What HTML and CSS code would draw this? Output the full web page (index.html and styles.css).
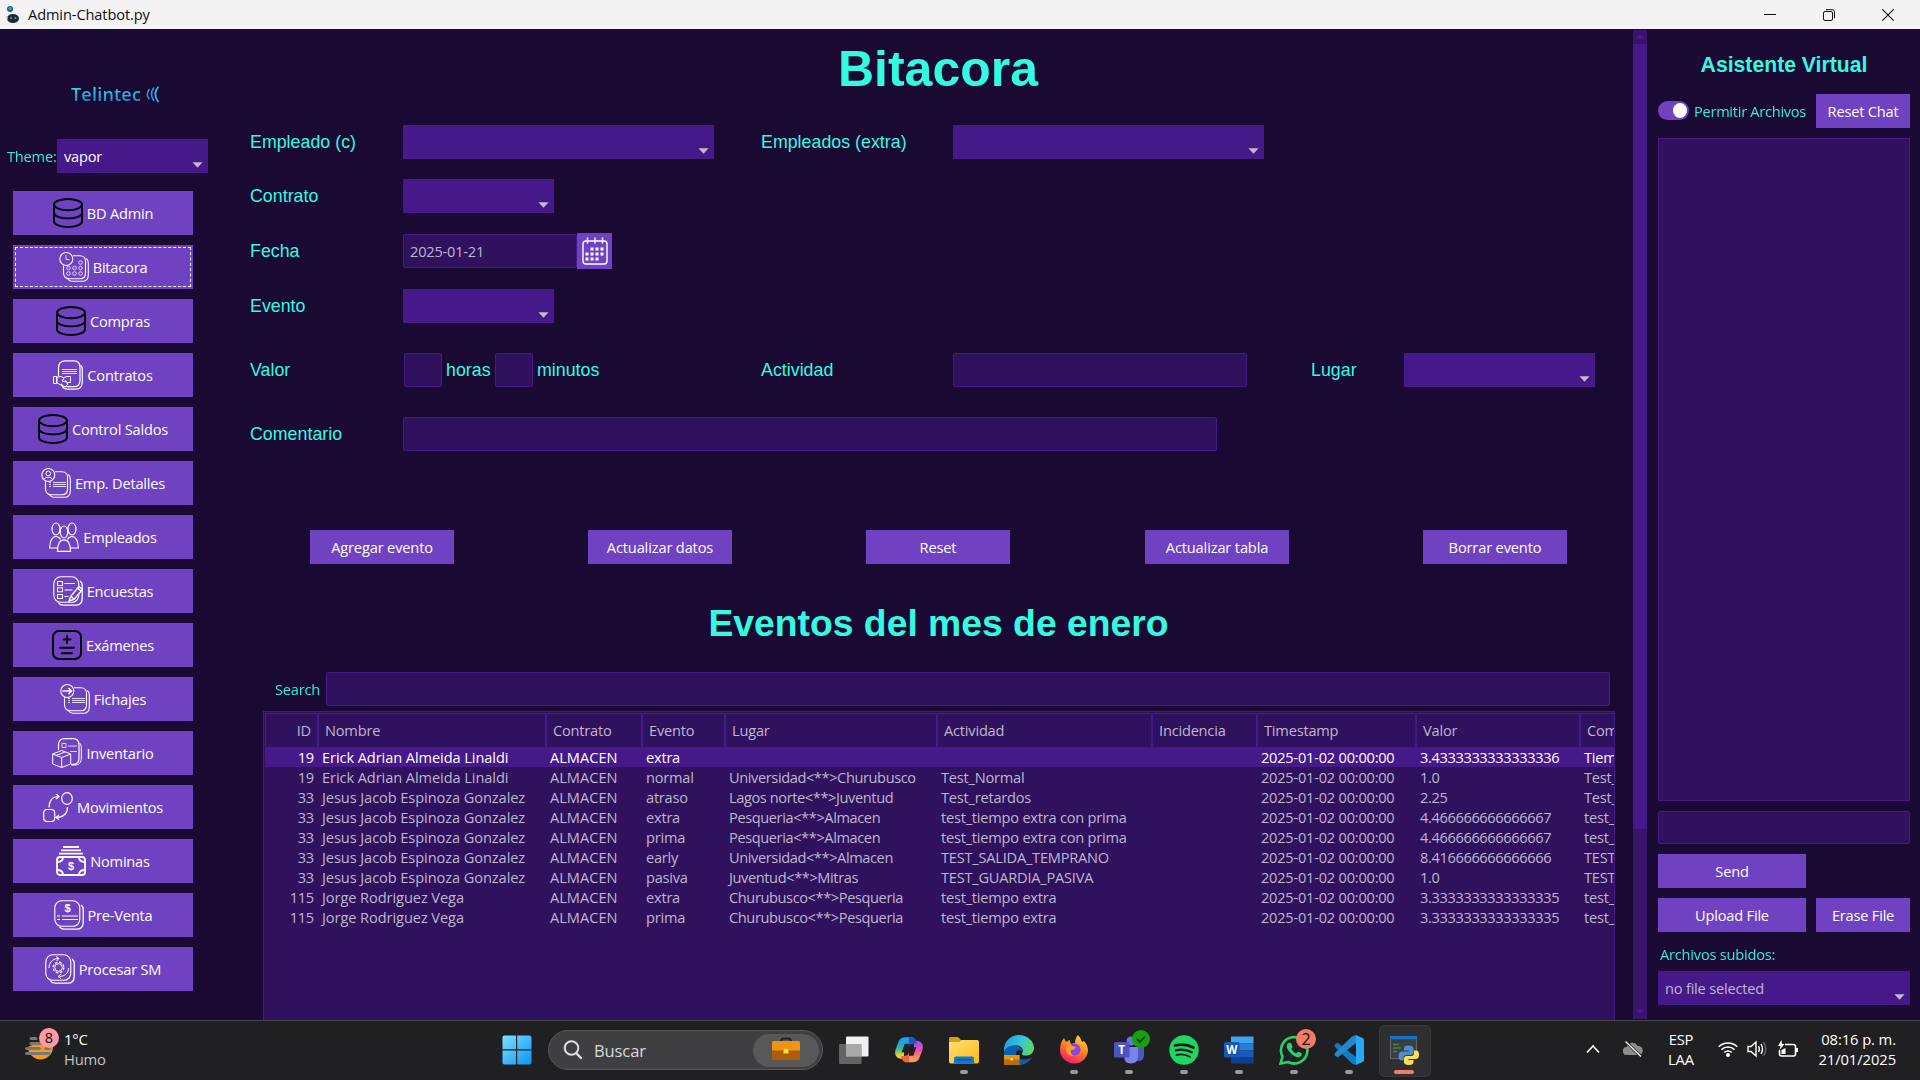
FILE: index.html
```html
<!DOCTYPE html>
<html lang="es">
<head>
<meta charset="utf-8">
<title>Admin-Chatbot.py</title>
<link rel="stylesheet" href="styles.css">
</head>
<body>
<svg class="defs" aria-hidden="true">
  <defs>
    <linearGradient id="gWin" x1="0" y1="0" x2="1" y2="1"><stop offset="0" stop-color="#7fe0ff"/><stop offset="1" stop-color="#0a93f5"/></linearGradient>
    <linearGradient id="gFox" x1="0.8" y1="0" x2="0.3" y2="1"><stop offset="0" stop-color="#ffe13c"/><stop offset=".45" stop-color="#ff8a1e"/><stop offset="1" stop-color="#f5156c"/></linearGradient>
    <linearGradient id="gEdge" x1="0" y1="0.3" x2="1" y2="0.5"><stop offset="0" stop-color="#1f9fe3"/><stop offset=".55" stop-color="#33c6dc"/><stop offset="1" stop-color="#5fd957"/></linearGradient>
    <linearGradient id="gFold" x1="0" y1="0" x2="1" y2="1"><stop offset="0" stop-color="#ffe07a"/><stop offset="1" stop-color="#fdb714"/></linearGradient>
    <linearGradient id="gCopA" x1="0" y1="0" x2="0" y2="1"><stop offset="0" stop-color="#1ea0f0"/><stop offset=".5" stop-color="#27b3b0"/><stop offset="1" stop-color="#e8d02c"/></linearGradient>
    <linearGradient id="gCopB" x1="0" y1="0" x2="0" y2="1"><stop offset="0" stop-color="#a552e8"/><stop offset=".5" stop-color="#f0569a"/><stop offset="1" stop-color="#fb9a55"/></linearGradient>
    <symbol id="db" viewBox="0 0 30 30"><g fill="none" stroke="#000" stroke-width="1.9"><ellipse cx="15" cy="6.6" rx="14" ry="5.6"/><path d="M1 6.6v17c0 3 6.3 5.4 14 5.4s14-2.4 14-5.4v-17"/><path d="M1 15c0 3 6.3 5.4 14 5.4S29 18 29 15"/></g></symbol>
    <symbol id="stack" viewBox="0 0 30 30"><g fill="none" stroke="#fff"><rect x=".8" y=".8" width="25" height="25.500" rx="7" stroke-width="1.1"/><path d="M27 5c1.500 1 2.200 2.500 2.200 4.500v13c0 4-2.500 6.700-6.700 6.700h-12c-2 0-4-.8-5-2.300" stroke-width="1.300"/></g></symbol>
    <symbol id="stackR" viewBox="0 0 30 30"><g fill="none" stroke="#fff" stroke-width="1.100"><path d="M14 3.800h7c3.500 0 5.500 2.500 5.500 5.500v11.500c0 3.500-2 6-5.500 6H10.500c-4 0-6-2.500-6-6V13.500"/><path d="M27.300 6.500c1.300 1 2 2.300 2 4.500v12c0 4-2.500 6.300-6.300 6.300H13c-2.500 0-3.500-1-4.500-2.500"/><circle cx="7.300" cy="7" r="6.500"/></g></symbol>
    <symbol id="arrow" viewBox="0 0 12 6"><path d="M.5 0h11L6 6z" fill="#c3bacd"/></symbol>
  </defs>
</svg>

<header class="titlebar">
  <svg class="app-icon" viewBox="0 0 16 18"><circle cx="5" cy="3" r="3" fill="#1c5f83"/><circle cx="5" cy="2.600" r="1.500" fill="#25b5d8"/><ellipse cx="8" cy="12.500" rx="6" ry="4.600" fill="#22282d"/><path d="M1 11l2-1v4z" fill="#9aa"/><circle cx="6" cy="12" r="1" fill="#25b5d8"/><circle cx="10.500" cy="12" r="1" fill="#25b5d8"/></svg>
  <span class="app-name">Admin-Chatbot.py</span>
  <div class="win-controls">
    <svg viewBox="0 0 12 12"><path d="M0 5.500h12" stroke="#111"/></svg>
    <svg viewBox="0 0 12 12"><g fill="none" stroke="#111"><rect x=".5" y="2.500" width="9" height="9" rx="1.500"/><path d="M3 .7h6c1.500 0 2.500 1 2.500 2.500v6"/></g></svg>
    <svg viewBox="0 0 12 12"><path d="M.3.300l11.400 11.400M11.700.300L.3 11.700" stroke="#111" stroke-width="1.100"/></svg>
  </div>
</header>

<div class="app">
  <nav class="sidebar">
    <div class="logo"><span class="logo-text">Telintec</span><svg viewBox="0 0 15 20"><g fill="none" stroke="#2a9bd6" stroke-width="1.500"><path d="M4.500 5q-4.500 5.500 0 10.500"/><path d="M9 3.500q-5 6.500 0 13.500"/><path d="M13.500 2.500q-6.500 7.500 0 15.500" stroke="#2fbcdf" stroke-width="1.800"/></g></svg></div>
    <div class="theme"><span class="lbl">Theme:</span><div class="combo theme-combo"><span>vapor</span><svg><use href="#arrow"/></svg></div></div>
    <div class="menu">
      <div class="btn"><svg><use href="#db"/></svg>BD Admin</div>
      <div class="btn focus"><svg viewBox="0 0 30 30"><use href="#stackR"/><g fill="none" stroke="#fff" stroke-width=".9" opacity=".85"><path d="M7 3v4.500h3.500"/><circle cx="21.500" cy="10.500" r="1.800"/><circle cx="9.500" cy="16" r="1.800"/><circle cx="15.500" cy="16" r="1.800"/><circle cx="21.500" cy="16" r="1.800"/><circle cx="9.500" cy="21.500" r="1.800"/><circle cx="15.500" cy="21.500" r="1.800"/><circle cx="21.500" cy="21.500" r="1.800"/></g></svg>Bitacora</div>
      <div class="btn"><svg><use href="#db"/></svg>Compras</div>
      <div class="btn"><svg viewBox="0 0 30 30"><g fill="none" stroke="#fff" stroke-width="1.200"><path d="M5.500 16V7.500c0-4 2.500-6.700 6.500-6.700h9c4 0 6 2.700 6 6.700v12.700c0 4-2 6.500-6 6.500h-8c-2.500 0-4-1-5-3"/><path d="M27.500 5c1.200 1 1.800 2.500 1.800 4.500V22c0 4.500-2.500 7.200-6.800 7.200h-8c-2.500 0-4-.8-5.500-3"/><path d="M9 9.500h15M9 11.500h15M9 13.500h15" opacity=".8"/><path d="M.6 16.500h3v7h-3zM4 17l4-.5 3 1.500-2 3 3 .5 3 2.500-3 3-8-4zM11 17.500l3-1h3.500v6H15M12 20l3 3" stroke-width="1"/></g></svg>Contratos</div>
      <div class="btn"><svg><use href="#db"/></svg>Control Saldos</div>
      <div class="btn"><svg viewBox="0 0 30 30"><use href="#stackR"/><g fill="none" stroke="#fff"><circle cx="7.300" cy="5.500" r="2.300"/><path d="M3 11.500c1-3 7.500-3 8.500 0"/><path d="M12 14.500h13M12 16.500h13M12 18.500h13M8 14.500h2M8 16.500h2M8 18.500h2" opacity=".8"/></g></svg>Emp. Detalles</div>
      <div class="btn"><svg viewBox="0 0 30 30"><g fill="none" stroke="#fff" stroke-width="1.200"><ellipse cx="7" cy="7" rx="4" ry="6"/><ellipse cx="23" cy="7" rx="4" ry="6"/><ellipse cx="15" cy="10" rx="3.800" ry="6"/><path d="M8.500 29.400c0-7 2-11.500 6.500-11.500s6.500 4.500 6.500 11.500z"/><path d="M8.500 26H.7c0-6 2-11.500 6.300-11.500 2 0 3.500 1 4.500 3M21.500 26h7.800c0-6-2-11.500-6.300-11.500-2 0-3.500 1-4.500 3"/></g></svg>Empleados</div>
      <div class="btn"><svg viewBox="0 0 30 30"><use href="#stack"/><g fill="none" stroke="#fff"><rect x="4.500" y="5.500" width="5" height="4"/><rect x="4.500" y="11.800" width="5" height="4"/><rect x="4.500" y="18.500" width="5" height="4"/><path d="M11.500 7.500h10.500M11.500 14h8M11.500 20.500h4"/><path d="M16 25l2-5 8-9.500 3.500 3L21 23.500zM18 20.500l3 2.500M24.500 12l3.500 3" fill="#6f42c1" stroke-width="1.400"/></g></svg>Encuestas</div>
      <div class="btn"><svg viewBox="0 0 30 30"><g fill="none" stroke="#000" stroke-width="2"><rect x="1" y="1" width="28" height="28" rx="6"/><path d="M15 6v7M11.500 9.500h7M8 17.700h14M10 23.300h10" stroke-linecap="round"/></g></svg>Exámenes</div>
      <div class="btn"><svg viewBox="0 0 30 30"><use href="#stackR"/><g fill="none" stroke="#fff"><path d="M2.500 7h9M8.500 4l3 3-3 3" stroke-width="1.500"/><path d="M12 14.500h13M12 16.500h13M12 18.500h13M8 14.500h2M8 16.500h2M8 18.500h2" opacity=".8"/></g></svg>Fichajes</div>
      <div class="btn"><svg viewBox="0 0 30 30"><g fill="none" stroke="#fff"><path d="M6.500 12V7c0-4 2-6.300 6-6.300h8.500c4 0 6 2.300 6 6.300v13c0 3.500-1.500 6-5 6.300h-3" stroke-width="1.200"/><path d="M27.500 5c1.200 1 1.800 2.500 1.800 4.500V20c0 4.500-2.500 7-6.300 7h-4"/><path d="M10 5.500h4v4h-4zM16 8h9M18 13.500h7" opacity=".8"/><path d="M.7 16l9-3.500 9 3.500v10l-9 3.500-9-3.500zM.7 16l9 3.500 9-3.500M9.700 19.500v10M4 17.500l9-3.500" fill="#6f42c1"/></g></svg>Inventario</div>
      <div class="btn"><svg viewBox="0 0 30 30"><g fill="none" stroke="#fff" stroke-width="1.200"><ellipse cx="24" cy="6.500" rx="5.300" ry="5.900"/><rect x=".7" y="17.500" width="11" height="12" rx="3.500"/><path d="M6 15.500C6 9 9 4.500 16 4.500M13 2l3 2.500-3 2.500M24.500 15c0 6-3 10-11 10.500M16 23l-3 2.500 3 2"/></g></svg>Movimientos</div>
      <div class="btn"><svg viewBox="0 0 30 30"><g fill="none" stroke="#fff" stroke-width="1.800"><path d="M7 1h16M5 4.300h20M3 7.700h24"/><rect x="1" y="11" width="28" height="18" rx="3"/><path d="M7 11c0 3-2 5-6 5M23 11c0 3 2 5 6 5M7 29c0-3-2-5-6-5M23 29c0-3 2-5 6-5"/></g><text x="15" y="24" class="glyph-s">$</text></svg>Nominas</div>
      <div class="btn"><svg viewBox="0 0 30 30"><use href="#stack"/><text x="13.500" y="11.500" class="glyph-s">$</text><path d="M3 16h3M8 16h16M3 19.500h3M8 19.500h16" stroke="#fff" stroke-width="1.100"/></svg>Pre-Venta</div>
      <div class="btn"><svg viewBox="0 0 30 30"><use href="#stack"/><g fill="none" stroke="#fff"><circle cx="13.500" cy="13.500" r="3.800"/><circle cx="13.500" cy="13.500" r="5.300" stroke-width="1.300" stroke-dasharray="2.600 1.560"/><path d="M4 14c0-5 3-9 9-9.500M11 2.500l3 2-2.500 2.500M23.500 14c0 5-3 8-9 8.500M16 20l-3 2.500 3 2"/></g></svg>Procesar SM</div>
    </div>
  </nav>

  <main class="main">
    <h1>Bitacora</h1>
    <div class="form">
      <label>Empleado (c)</label><div class="combo w311"><svg><use href="#arrow"/></svg></div>
      <label>Empleados (extra)</label><div class="combo w311"><svg><use href="#arrow"/></svg></div>
      <label class="row-start">Contrato</label><div class="combo w151"><svg><use href="#arrow"/></svg></div>
      <label class="row-start">Fecha</label>
      <div class="date"><div class="entry w173">2025-01-21</div><div class="cal"><svg viewBox="0 0 26 28"><g fill="none" stroke="#fff" stroke-width="1.400"><rect x="1" y="4" width="24" height="23" rx="3"/><path d="M5.500.5v6M13 .5v6M20.500.5v6"/></g><g fill="#fff"><path d="M8.500 10.500h3v3h-3zM13.500 10.500h3v3h-3zM18.500 10.500h3v3h-3zM3.500 15.500h3v3h-3zM8.500 15.500h3v3h-3zM13.500 15.500h3v3h-3zM18.500 15.500h3v3h-3zM3.500 20.500h3v3h-3zM8.500 20.500h3v3h-3zM13.500 20.500h3v3h-3z"/></g></svg></div></div>
      <label class="row-start">Evento</label><div class="combo w151"><svg><use href="#arrow"/></svg></div>
      <label class="row-start">Valor</label>
      <div class="time"><div class="entry w38"></div><label>horas</label><div class="entry w38"></div><label>minutos</label></div>
      <label>Actividad</label><div class="entry w294"></div>
      <label>Lugar</label><div class="combo w191"><svg><use href="#arrow"/></svg></div>
      <label class="row-start">Comentario</label><div class="entry wide"></div>
    </div>
    <div class="actions">
      <div class="btn">Agregar evento</div><div class="btn">Actualizar datos</div><div class="btn">Reset</div><div class="btn">Actualizar tabla</div><div class="btn">Borrar evento</div>
    </div>
    <h2>Eventos del mes de enero</h2>
    <div class="search"><span class="lbl">Search</span><div class="entry"></div></div>
    <div class="table">
      <div class="tr head"><span>ID</span><span>Nombre</span><span>Contrato</span><span>Evento</span><span>Lugar</span><span>Actividad</span><span>Incidencia</span><span>Timestamp</span><span>Valor</span><span>Comentario</span></div>
      <div class="tr sel"><span>19</span><span>Erick Adrian Almeida Linaldi</span><span>ALMACEN</span><span>extra</span><span></span><span></span><span></span><span>2025-01-02 00:00:00</span><span>3.4333333333333336</span><span>Tiempo</span></div>
      <div class="tr"><span>19</span><span>Erick Adrian Almeida Linaldi</span><span>ALMACEN</span><span>normal</span><span>Universidad&lt;**&gt;Churubusco</span><span>Test_Normal</span><span></span><span>2025-01-02 00:00:00</span><span>1.0</span><span>Test_</span></div>
      <div class="tr"><span>33</span><span>Jesus Jacob Espinoza Gonzalez</span><span>ALMACEN</span><span>atraso</span><span>Lagos norte&lt;**&gt;Juventud</span><span>Test_retardos</span><span></span><span>2025-01-02 00:00:00</span><span>2.25</span><span>Test_</span></div>
      <div class="tr"><span>33</span><span>Jesus Jacob Espinoza Gonzalez</span><span>ALMACEN</span><span>extra</span><span>Pesqueria&lt;**&gt;Almacen</span><span>test_tiempo extra con prima</span><span></span><span>2025-01-02 00:00:00</span><span>4.466666666666667</span><span>test_t</span></div>
      <div class="tr"><span>33</span><span>Jesus Jacob Espinoza Gonzalez</span><span>ALMACEN</span><span>prima</span><span>Pesqueria&lt;**&gt;Almacen</span><span>test_tiempo extra con prima</span><span></span><span>2025-01-02 00:00:00</span><span>4.466666666666667</span><span>test_t</span></div>
      <div class="tr"><span>33</span><span>Jesus Jacob Espinoza Gonzalez</span><span>ALMACEN</span><span>early</span><span>Universidad&lt;**&gt;Almacen</span><span>TEST_SALIDA_TEMPRANO</span><span></span><span>2025-01-02 00:00:00</span><span>8.416666666666666</span><span>TEST_</span></div>
      <div class="tr"><span>33</span><span>Jesus Jacob Espinoza Gonzalez</span><span>ALMACEN</span><span>pasiva</span><span>Juventud&lt;**&gt;Mitras</span><span>TEST_GUARDIA_PASIVA</span><span></span><span>2025-01-02 00:00:00</span><span>1.0</span><span>TEST_</span></div>
      <div class="tr"><span>115</span><span>Jorge Rodriguez Vega</span><span>ALMACEN</span><span>extra</span><span>Churubusco&lt;**&gt;Pesqueria</span><span>test_tiempo extra</span><span></span><span>2025-01-02 00:00:00</span><span>3.3333333333333335</span><span>test_t</span></div>
      <div class="tr"><span>115</span><span>Jorge Rodriguez Vega</span><span>ALMACEN</span><span>prima</span><span>Churubusco&lt;**&gt;Pesqueria</span><span>test_tiempo extra</span><span></span><span>2025-01-02 00:00:00</span><span>3.3333333333333335</span><span>test_t</span></div>
    </div>
  </main>

  <div class="scrollbar">
    <svg viewBox="0 0 14 14"><path d="M3 8l3.500-4L10 8z" fill="#4b1c90"/></svg>
    <div class="thumb"></div>
    <svg viewBox="0 0 14 14"><path d="M3 5l3.500 4L10 5z" fill="#4b1c90"/></svg>
  </div>

  <aside class="assistant">
    <h3>Asistente Virtual</h3>
    <div class="arow first"><div class="allow"><div class="toggle"><i></i></div><span class="lbl">Permitir Archivos</span></div><div class="btn">Reset Chat</div></div>
    <div class="chat"></div>
    <div class="entry msg"></div>
    <div class="arow"><div class="btn">Send</div></div>
    <div class="arow"><div class="btn">Upload File</div><div class="btn">Erase File</div></div>
    <span class="lbl files">Archivos subidos:</span>
    <div class="combo file-combo"><span>no file selected</span><svg><use href="#arrow"/></svg></div>
  </aside>
</div>

<footer class="taskbar">
  <div class="weather">
    <div class="w-icon"><svg viewBox="0 0 30 30"><path d="M3 14a12.500 12.500 0 0 0 25 0V9H14z" fill="#f39a22"/><path d="M6 5.500h5M6 10.500h10M1.500 15.500h13M21 15.500h3.500M1.500 20.500h23" stroke="#777" stroke-width="3" stroke-linecap="round"/></svg><b class="badge pink">8</b></div>
    <div class="w-text"><div>1°C</div><div class="dim">Humo</div></div>
  </div>
  <div class="dock">
    <div class="slot"><svg viewBox="0 0 30 30"><path d="M.5 2.500a2 2 0 0 1 2-2H14V14.200H.5zM15.200.5h12.300a2 2 0 0 1 2 2v11.700H15.200zM.5 15.400H14v14H2.500a2 2 0 0 1-2-2zM15.200 15.400h14.300v12a2 2 0 0 1-2 2H15.200z" fill="url(#gWin)"/></svg></div>
    <div class="pill">
      <svg class="lens" viewBox="0 0 20 20"><circle cx="8.500" cy="8" r="6.800" fill="none" stroke="#e0e0e0" stroke-width="2"/><path d="M13.500 13.500l4.500 4.500" stroke="#e0e0e0" stroke-width="2.400" stroke-linecap="round"/></svg>
      <span>Buscar</span>
      <div class="pill-in"><svg viewBox="0 0 30 26"><path d="M10 5q0-3.500 3-3.500h4q3 0 3 3.500" fill="none" stroke="#222" stroke-width="2"/><rect x="1" y="4" width="28" height="19" rx="1.500" fill="#a85f08"/><path d="M1 13.500V5.500Q1 4 2.500 4h25Q29 4 29 5.500v8z" fill="#ef9413"/><path d="M12.500 11.500h5v5h-5z" fill="#ffe03a" stroke="#d9a400"/></svg></div>
    </div>
    <div class="slot"><svg viewBox="0 0 30 30"><rect x="7" y="1.500" width="22.500" height="20" rx="1" fill="#f1f1f1"/><rect x="0" y="9" width="22.500" height="20" rx="1" fill="#7b7b7b" opacity=".75"/><path d="M7 9h15.500v12.500H7z" fill="#a9a9a9"/></svg></div>
    <div class="slot"><svg viewBox="0 0 30 30"><g fill="none" stroke-width="6.500" stroke-linejoin="round"><path d="M19 5.500H11q-3 0-4 4L4.500 16q-1 4 2.500 4.500h3" stroke="url(#gCopA)"/><path d="M11 24h8q3 0 4-4l2.500-6.500q1-4-2.500-4.500h-3" stroke="url(#gCopB)"/></g><path d="M15 2.500h4q2 0 3 3l1 3h-5q-2.500 0-3.500 4z" fill="#2253c8"/><path d="M15 27h-4q-2 0-3-3l-1-3h4q3 0 4-4z" fill="#f2643d"/></svg></div>
    <div class="slot run"><svg viewBox="0 0 30 30"><path d="M0 3.500Q0 2 1.500 2H9l3 3h15q2 0 2 2v5H0z" fill="#dc9a0c"/><path d="M0 7h10l3-2h15q2 0 2 2v19.500q0 2-2 2H2q-2 0-2-2z" fill="url(#gFold)"/><path d="M5 28.500v-5q0-2 2-2h16q2 0 2 2v5z" fill="#1079cf"/><path d="M8 24.800h14" stroke="#07528f" stroke-width="1.200"/></svg></div>
    <div class="slot"><svg viewBox="0 0 30 30"><path d="M0 15C0 6 7 0 15 0s15 6 15 13c0 5-4 7.500-8 7.500-3 0-4.500-1-4-2 2-3 .5-8-5.500-8C6 10.500 1 13 0 19z" fill="url(#gEdge)"/><path d="M0 19c0-5 4-8.500 10-8.500 4 0 8 2.500 8 5.500-2-2-6-1-6 3 0 6 9 7 16 3.500-3 5-8 7.500-13 7.500C7 30 0 25 0 19z" fill="#0d5fae"/><path d="M0 20h15.500v10H0z" fill="#b96c0c"/><path d="M0 20h15.500v4.500H0z" fill="#e8921a"/><path d="M6.500 23h2.500v2.500H6.500z" fill="#ffe14a"/></svg></div>
    <div class="slot run"><svg viewBox="0 0 30 30"><path d="M1 15c0-5 1.500-9 4-12l2 4 3.500-2L12 9l4-1c0-3 1-6 3-8q3 3 4 7l2-1c3 3 4 7 4 10-1 8-7 12.500-14 12.500S1 23 1 15z" fill="url(#gFox)"/><circle cx="15.500" cy="14.500" r="6" fill="#8a45e6"/><path d="M7 10.500q3-2 6 .5l4 1q-1 3-5 3-1 4 3 6-7 0-8-6z" fill="#ff9a2c"/></svg></div>
    <div class="slot run"><svg viewBox="0 0 30 30"><circle cx="17" cy="6" r="4.500" fill="#6a73df"/><path d="M22 12h8v8q0 6-6 6h-4z" fill="#4e57c4"/><path d="M10 12h14v9q0 7.500-7 7.500T10 21z" fill="#7b83eb"/><rect x="0" y="7" width="15.500" height="15.500" rx="1.500" fill="#4b53bc"/><text x="7.700" y="19" class="app-letter">T</text></svg><b class="badge green"><svg viewBox="0 0 18 18"><path d="M5 9l3 3 5-5.500" fill="none" stroke="#10330f" stroke-width="1.800"/></svg></b></div>
    <div class="slot run"><svg viewBox="0 0 30 30"><circle cx="15" cy="15" r="14.700" fill="#1ed760"/><g fill="none" stroke="#191a1c" stroke-linecap="round"><path d="M6 10.500q9.500-2.500 18.500 2" stroke-width="2.800"/><path d="M6.800 15.300q8.500-2 16 2" stroke-width="2.300"/><path d="M7.500 20q7-1.800 13.500 1.800" stroke-width="1.900"/></g></svg></div>
    <div class="slot run"><svg viewBox="0 0 30 30"><path d="M7 1.500h22.500v7H7z" fill="#41a5ee"/><path d="M7 8.500h22.500v7H7z" fill="#2b7cd3"/><path d="M7 15.500h22.500V22H7z" fill="#185abd"/><path d="M7 22h22.500v6.500H7z" fill="#103f91"/><rect x="0" y="7" width="15.500" height="15.500" rx="1.500" fill="#1957b8"/><text x="7.700" y="19" class="app-letter">W</text></svg></div>
    <div class="slot run"><svg viewBox="0 0 30 30"><path d="M1.500 28.500l2-7A13.200 13.200 0 1 1 9 27z" fill="none" stroke="#25d366" stroke-width="2.600"/><path d="M9.500 8q2-1 3 1l1 2.500q.3 1-1.300 2.500 1.800 3 5 4.500 1.500-2 2.500-1.800l3 1.500q.5 3-3 4-3 .5-7.500-3.500-4.500-4.500-4.500-7.500.200-2.200 1.800-3.200z" fill="#25d366"/></svg><b class="badge coral">2</b></div>
    <div class="slot run"><svg viewBox="0 0 30 30"><path d="M22 0v30l-4-1.500L1 12q-1-1.500 0-2.500l1.500-1.300q1-.7 2 0L22 22z" fill="#0f7cc8"/><path d="M22 0L18 1.500 1 18q-1 1.500 0 2.500l1.500 1.300q1 .7 2 0L22 8z" fill="#2489ca"/><path d="M22 0l7 3.300q1 .5 1 1.500v20.400q0 1-1 1.500L22 30z" fill="#29a9f2"/></svg></div>
    <div class="slot run active"><svg viewBox="0 0 30 30"><rect x="1.500" y="1.500" width="26" height="22" fill="#3b3d40" stroke="#666"/><path d="M1 1.200h27v3H1z" fill="#0b76cf"/><path d="M4 9.500h6M4 13h8M4 16.500h4" stroke="#3c8b3c" stroke-width="1.300"/><path d="M19.500 10.500c-4 0-4.500 1.500-4.500 3v2h5v1h-7c-2.500 0-3.500 2-3.500 4.500s1 4.500 3 4.500h2v-3c0-1.500 1-2.500 2.500-2.500h5c1.500 0 2.500-1 2.500-2.500v-4c0-2-1.500-3-5-3z" fill="#4a8fc9"/><path d="M19.500 30c4 0 5-1 5-3v-2h-5v-1h7.500c2 0 3-2 3-4.500s-1-4-3-4h-2v3c0 1.500-1 2.500-2.500 2.500h-5c-1.500 0-2.500 1-2.500 2.500V27c0 2 1.500 3 4.500 3z" fill="#ffdd55"/></svg></div>
  </div>
  <div class="tray">
    <svg class="chev" viewBox="0 0 14 10"><path d="M1 8.500L7 2l6 6.500" fill="none" stroke="#fff" stroke-width="1.600"/></svg>
    <svg class="cloud" viewBox="0 0 20 18"><path d="M4 15a4 4 0 0 1-.5-8 6 6 0 0 1 11-1 4.500 4.500 0 0 1 1.500 9z" fill="#8d8d8d"/><path d="M2.500 1.500l15.500 15" stroke="#222" stroke-width="3"/><path d="M2.500 1.500l15.500 15" stroke="#fff" stroke-width="1.300"/></svg>
    <div class="lang"><div>ESP</div><div>LAA</div></div>
    <svg class="wifi" viewBox="0 0 20 18"><g fill="none" stroke="#fff" stroke-width="1.500"><path d="M.7 6.800a13 13 0 0 1 18.600 0M3.500 9.600a9.200 9.200 0 0 1 13 0M6.300 12.400a5.300 5.300 0 0 1 7.400 0"/></g><circle cx="10" cy="15" r="2" fill="#fff"/></svg>
    <svg class="snd" viewBox="0 0 20 18"><g fill="none" stroke="#fff" stroke-width="1.400"><path d="M1 6.500h3L9 2v14l-5-4.500H1z"/><path d="M11.500 6q1.700 3 0 6M14 4q3 5 0 10"/><path d="M16.500 2q4.500 7 0 14" stroke="#666"/></g></svg>
    <svg class="bat" viewBox="0 0 22 18"><path d="M8 4.500h8.500q2 0 2 2v7.500q0 2-2 2h-12q-2 0-2-2V10" fill="none" stroke="#fff" stroke-width="1.600"/><path d="M20 8v4" stroke="#fff" stroke-width="2"/><path d="M4.500 14v-4l4-2v6zM4.500 0L1 6h2.500L2.500 10 7.500 4H5z" fill="#fff"/></svg>
    <div class="clock"><div>08:16 p. m.</div><div>21/01/2025</div></div>
  </div>
</footer>
</body>
</html>
```
FILE: styles.css
```css
* { box-sizing: border-box; }
html, body { margin: 0; width: 1920px; height: 1080px; overflow: hidden; }
body {
  display: flex; flex-direction: column;
  background: #1a0933; color: #fff;
  font: 14.6px/20px "Open Sans", "Noto Sans", sans-serif;
  letter-spacing: -.2px;
  white-space: nowrap;
}
svg { display: block; flex: none; }
.defs { position: absolute; width: 0; height: 0; }

.titlebar { display: flex; align-items: center; height: 29px; background: #f3f3f4; color: #111; padding-left: 5px; flex: none; }
.app-icon { width: 16px; height: 18px; margin-right: 7px; }
.app-name { letter-spacing: -.1px; padding-bottom: 1px; }
.win-controls { margin-left: auto; display: flex; gap: 47px; padding-right: 26px; }
.win-controls svg { width: 12px; height: 12px; }

.app { display: flex; height: 991px; flex: none; }
.lbl { color: #32fbe2; opacity: .95; }

.combo { height: 34px; background: #46198a; display: flex; align-items: center; justify-content: space-between; padding: 0 5px 0 7px; }
.combo svg { width: 11px; height: 6px; margin: 17px 0 0 auto; }
.entry { height: 34px; background: #30115e; border: 1px solid #46198a; border-radius: 2px; color: #bfb6cd; display: flex; align-items: center; padding: 0 0 0 6px; }
.btn { background: #6f42c1; height: 34px; display: flex; align-items: center; justify-content: center; }

.sidebar { width: 243px; flex: none; }
.logo { display: flex; align-items: center; height: 22px; margin: 54px 0 0 71px; }
.logo svg { width: 15px; height: 20px; margin-left: 1px; }
.logo-text { font: 600 18px/24px "Open Sans", sans-serif; letter-spacing: .2px; background: linear-gradient(#2ed3e6 25%, #2485cf 85%); -webkit-background-clip: text; background-clip: text; color: transparent; width: 73px; }
.theme { display: flex; align-items: center; margin: 34px 0 18px 7px; }
.theme .lbl { width: 50px; }
.theme-combo { width: 151px; }
.menu { display: flex; flex-direction: column; gap: 10px; padding-left: 13px; }
.menu .btn { width: 180px; height: 44px; gap: 4px; }
.menu svg { width: 30px; height: 30px; }
.menu .focus { outline: 1px dashed #fff; outline-offset: -3px; }
.glyph-s { font: 700 11px "Liberation Sans", sans-serif; fill: #fff; text-anchor: middle; letter-spacing: 0; }

.main { width: 1390px; flex: none; overflow: hidden; }
h1, h2, h3 { margin: 0; color: #32fbe2; text-align: center; font-family: "Liberation Sans", Arial, sans-serif; letter-spacing: 0; }
h1 { font-size: 50px; line-height: 79px; height: 79px; padding-top: 1px; }
.form {
  display: grid; padding: 17px 0 0 7px;
  grid-template-columns: 153px 358px 192px 358px 93px 191px;
  grid-template-rows: 54px 55px 55px 64px 64px 34px;
  align-items: start;
}
.form label { font: 17.8px/34px "Liberation Sans", Arial, sans-serif; letter-spacing: .02px; color: #32fbe2; }
.row-start { grid-column: 1; }
.w311 { width: 311px; } .w151 { width: 151px; } .w173 { width: 174px; } .w38 { width: 38px; }
.w294 { width: 294px; } .w191 { width: 191px; }
.wide { grid-column: 2 / 5; width: 814px; }
.date { display: flex; align-items: center; margin-top: -1px; }
.cal { width: 35px; height: 36px; background: #6f42c1; display: flex; align-items: center; justify-content: center; }
.cal svg { width: 26px; height: 28px; }
.time { display: flex; padding-left: 1px; }
.time label { padding-left: 4px; width: 53px; }
.actions { display: flex; justify-content: space-between; margin: 79px 67px 0 67px; }
.actions .btn { width: 144px; letter-spacing: -.14px; }
.actions .btn:nth-child(n+4) { position: relative; left: 1px; }
h2 { font-size: 37.300px; line-height: 98px; padding: 10px 0 0 1px; }
.search { display: flex; align-items: center; padding-left: 32px; }
.search .lbl { width: 51px; }
.search .entry { width: 1284px; }

.table { width: 1352px; height: 320px; margin: 5px 0 0 20px; background: #30115e; border: 1px solid #46198a; padding: 1px 0 0 1px; color: #bfb6cd; overflow: hidden; }
.tr { display: grid; grid-template-columns: 53px 228px 96px 83px 212px 215px 105px 159px 164px 100px; height: 20px; width: 1415px; letter-spacing: -.22px; }
.tr span { padding-left: 4px; line-height: 20px; }
.tr span:first-child { text-align: right; padding: 0 4px 0 0; }
.tr span:nth-child(2) { letter-spacing: -.08px; }
.tr span:nth-child(3) { letter-spacing: 0; }
.tr span:nth-child(5) { letter-spacing: -.4px; }
.tr span:nth-child(9) { letter-spacing: -.36px; }
.tr.head { height: 34px; }
.tr.head span { border: 1px solid #46198a; border-bottom: 0; border-radius: 2px 2px 0 0; line-height: 33px; padding-left: 6px; letter-spacing: -.2px; }
.tr.head span:first-child { padding-right: 6px; }
.tr.sel { background: #46198a; color: #fff; }

.scrollbar { width: 14px; height: 989px; margin-top: 1px; background: #38146c; display: flex; flex-direction: column; flex: none; }
.scrollbar svg { width: 14px; height: 14px; }
.thumb { height: 785px; margin-bottom: auto; background: #46198a; }

.assistant { width: 273px; padding: 0 10px 0 11px; display: flex; flex-direction: column; }
h3 { font-size: 21.200px; line-height: 24px; padding: 24px 0 17px; }
.arow { display: grid; grid-template-columns: 148px 94px; gap: 10px; margin-bottom: 10px; }
.allow { display: flex; align-items: center; gap: 5px; }
.allow .lbl { letter-spacing: -.27px; }
.toggle { width: 31px; height: 19px; border-radius: 10px; background: #6f42c1; display: flex; justify-content: flex-end; padding: 2px 2px; margin-top: -1px; flex: none; }
.toggle i { width: 14px; height: 15px; border-radius: 50%; background: #fff; }
.chat { height: 663px; background: #30115e; border: 1px solid #46198a; margin-bottom: 10px; }
.msg { height: 33px; margin-bottom: 10px; }
.files { padding: 2px 0 0 2px; height: 29px; }
.file-combo { color: #bfb6cd; }

.taskbar { height: 60px; background: #202022; border-top: 1px solid #48484a; display: flex; flex: none; }
.weather { width: 489px; display: flex; padding: 8px 0 0 25px; gap: 9px; }
.w-icon { position: relative; width: 30px; height: 30px; margin-top: 4px; }
.w-icon svg { width: 30px; height: 30px; }
.w-text { font-size: 14.800px; }
.dim { color: #c4c4c4; }
.badge { position: absolute; width: 20px; height: 20px; border-radius: 50%; color: #111; font: 14.500px/20px "Open Sans", sans-serif; letter-spacing: 0; text-align: center; }
.pink { background: #ff99a4; left: 14px; top: -5px; }
.dock { display: flex; width: 1093px; }
.slot { position: relative; width: 55px; height: 59px; display: flex; justify-content: center; padding-top: 14px; }
.slot > svg { width: 30px; height: 30px; }
.slot.run::after { content: ""; position: absolute; left: 24px; top: 49px; width: 8px; height: 4px; border-radius: 2px; background: #9a9a9c; }
.slot.active::before { content: ""; position: absolute; left: 3px; top: 4px; width: 50px; height: 50px; border-radius: 5px; background: #2f2f31; border: 1px solid #39393b; }
.slot.active svg { position: relative; }
.slot.active::after { left: 18px; width: 20px; background: #f27d66; }
.pill { width: 275px; height: 40px; margin: 9px 3px 0 4px; border-radius: 20px; background: #3f3f42; border: 1px solid #57575a; display: flex; align-items: center; padding: 0 3px 0 14px; color: #d8d8d8; font-size: 16.500px; letter-spacing: -.1px; }
.pill span { padding-top: 1px; }
.lens { width: 20px; height: 20px; margin-right: 11px; }
.pill-in { margin-left: auto; width: 66px; height: 33px; border-radius: 17px; background: #58585b; display: flex; align-items: center; justify-content: center; }
.pill-in svg { width: 30px; height: 26px; }
.app-letter { font: 700 11.500px "Open Sans", sans-serif; letter-spacing: 0; fill: #fff; text-anchor: middle; }
.green { background: #13a10e; width: 18px; height: 18px; left: 31px; top: 9px; }
.green svg { width: 18px; height: 18px; }
.coral { background: #f27d66; left: 30px; top: 8px; font-size: 16px; }
.tray { display: flex; align-items: center; padding-bottom: 3px; font-size: 14.800px; }
.chev { width: 14px; height: 10px; margin-left: 4px; }
.cloud { width: 20px; height: 18px; margin-left: 23px; }
.lang { width: 44px; margin-left: 16px; text-align: center; }
.wifi { width: 20px; height: 18px; margin-left: 15px; }
.snd { width: 20px; height: 18px; margin-left: 9px; }
.bat { width: 22px; height: 18px; margin-left: 10px; }
.clock { width: 97px; text-align: right; letter-spacing: -.1px; }
```
